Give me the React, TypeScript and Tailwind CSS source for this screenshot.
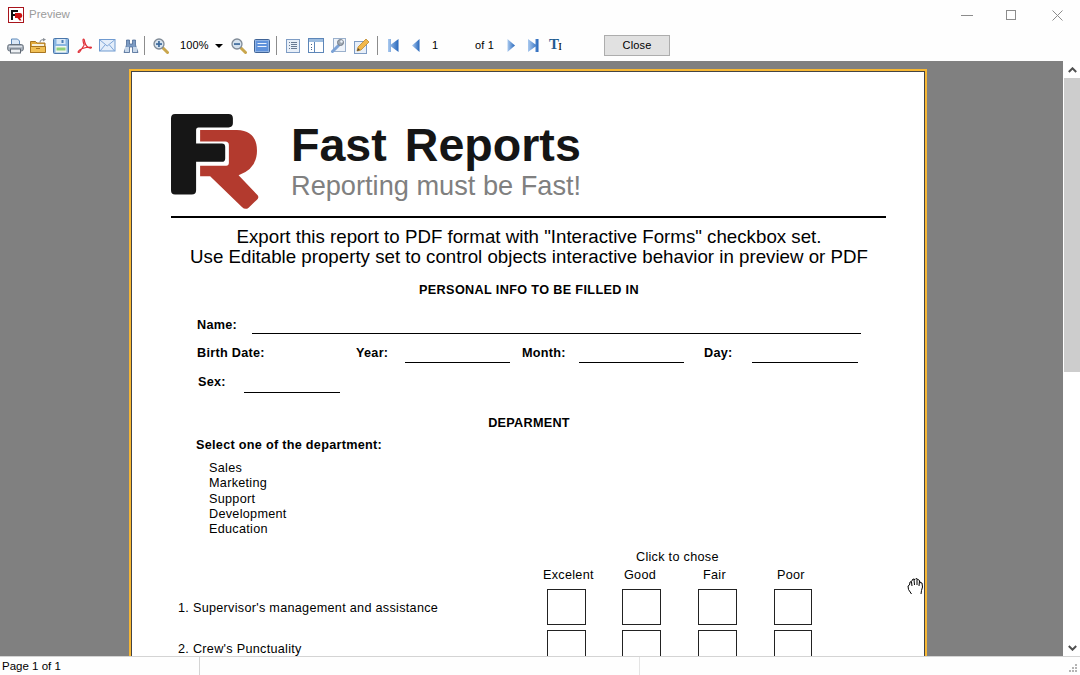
import React from "react";

const Sep = ({ ml }: { ml: string }) => <div className={`w-px h-[19px] bg-[#8c8c8c] ${ml}`} />;

const Printer = () => (
  <svg width="17" height="16" viewBox="0 0 17 16">
    <path d="M4.5 1h6l2 2v4h-8z" fill="#dbe8f7" stroke="#5f8abb" />
    <rect x="0.7" y="6.5" width="15.6" height="6.5" rx="2" fill="#aab3be" stroke="#6a737e" />
    <rect x="3.5" y="11" width="10" height="4" fill="#eef1f4" stroke="#5f6874" />
    <rect x="2" y="8" width="13" height="1.2" fill="#dfe4ea" />
  </svg>
);
const Folder = () => (
  <svg width="17" height="16" viewBox="0 0 17 16">
    <path d="M10 4.5c0-2 2-3 4-3" fill="none" stroke="#8a8f96" strokeWidth="1.2" />
    <path d="M13 0l3 1.5-3 2z" fill="#8a8f96" />
    <path d="M.5 3.5h5l1.5 1.5h8v9.5H.5z" fill="#e0a93c" stroke="#a87520" />
    <rect x="2" y="6" width="12" height="3" fill="#f5efdc" />
    <path d="M.5 8.5h15v6H.5z" fill="#f0bf55" stroke="#a87520" />
    <rect x="6" y="10" width="4" height="1" fill="#a87520" />
  </svg>
);
const Save = () => (
  <svg width="16" height="16" viewBox="0 0 16 16">
    <rect x="0.5" y="0.5" width="15" height="15" rx="1" fill="#8ab6e2" stroke="#4a76aa" />
    <rect x="3.5" y="1" width="9" height="5" fill="#dbe9f7" />
    <rect x="8.5" y="2" width="2" height="3" fill="#4a7db5" />
    <rect x="2.5" y="8" width="11" height="6.5" fill="#f2f6f0" />
    <rect x="3.5" y="9.5" width="9" height="3" fill="#8fd07a" />
  </svg>
);
const Pdf = () => (
  <svg width="15" height="16" viewBox="0 0 15 16">
    <path d="M6.6 1c-1 0-.6 3 .6 6L3 13.5c-1 1.5-2.4 1-1.8 0C2 12 6 9.6 14 9c.8 0 .5 1.4-.6 1.2C11 9.7 8.6 7.5 7.7 4 7.3 2.4 7.6 1 6.6 1z" fill="none" stroke="#e0313a" strokeWidth="1.2" />
  </svg>
);
const Mail = () => (
  <svg width="17" height="13" viewBox="0 0 17 13">
    <rect x="0.5" y="0.5" width="15.5" height="11.5" fill="#e4eefa" stroke="#6f9ad0" />
    <path d="M1 1l7.2 6L15.5 1M1 12l5-6M15.5 12l-5-6" fill="none" stroke="#7fa6d8" />
  </svg>
);
const Binoculars = () => (
  <svg width="16" height="16" viewBox="0 0 16 16">
    <path d="M3.5 2h3v4h3V2h3v5l2.5 7.5H9.5V9h-3v5.5H1L3.5 7z" fill="#7d9cc4" stroke="#3f5f8c" strokeWidth="0.7" />
    <rect x="2" y="9" width="4" height="5" fill="#c7d7ea" />
    <rect x="10" y="9" width="4" height="5" fill="#c7d7ea" />
  </svg>
);
const Zoom = ({ plus }: { plus?: boolean }) => (
  <svg width="16" height="16" viewBox="0 0 16 16">
    <path d="M10 10l4.5 4.5" stroke="#c9a64c" strokeWidth="3" strokeLinecap="round" />
    <circle cx="6" cy="6" r="5" fill="#d5e2ee" stroke="#7f8a96" strokeWidth="1.3" />
    <rect x="3" y="5.2" width="6" height="1.7" fill="#3d6a9c" />
    {plus && <rect x="5.1" y="3" width="1.7" height="6" fill="#3d6a9c" />}
  </svg>
);
const PageView = () => (
  <svg width="16" height="14" viewBox="0 0 16 14">
    <rect x="0.5" y="0.5" width="15" height="13" rx="1" fill="#8fb2e2" stroke="#3f6396" />
    <rect x="2" y="2" width="12" height="10" fill="#5f92dc" />
    <rect x="3.5" y="4" width="9" height="1" fill="#eaf2fc" />
    <rect x="3.5" y="7" width="9" height="1" fill="#eaf2fc" />
  </svg>
);
const Outline = () => (
  <svg width="14" height="14" viewBox="0 0 14 14">
    <rect x="0.5" y="0.5" width="13" height="13" fill="#e8eff8" stroke="#7e9cc4" />
    <path d="M5 3.5h6M5 5.5h6M5 7.5h6M5 9.5h6M3 3.5h1M3 6.5h1M3 9.5h1" stroke="#687a92" />
  </svg>
);
const Thumbs = () => (
  <svg width="16" height="15" viewBox="0 0 16 15">
    <rect x="0.5" y="0.5" width="15" height="14" fill="#fff" stroke="#5d86b8" />
    <rect x="1" y="1" width="14" height="3" fill="#9dbde0" />
    <rect x="6" y="4" width="1" height="10" fill="#5d86b8" />
    <path d="M3 6h1v1H3zM3 9h1v1H3zM3 12h1v-1H3z" fill="#44648c" />
  </svg>
);
const Wrench = () => (
  <svg width="15" height="15" viewBox="0 0 15 15">
    <rect x="2.5" y="0.5" width="12" height="13" fill="#eef3fa" stroke="#9ab0cc" />
    <path d="M1.5 13.5l6-6" stroke="#7ba2d6" strokeWidth="3" strokeLinecap="round" />
    <circle cx="9.5" cy="4.5" r="3" fill="#9fa8b2" stroke="#727c88" />
    <circle cx="10.5" cy="3.5" r="1.2" fill="#eef3fa" />
  </svg>
);
const Pencil = () => (
  <svg width="17" height="16" viewBox="0 0 17 16">
    <rect x="0.5" y="3.5" width="12" height="12" fill="#e8eff8" stroke="#7e9cc4" />
    <path d="M3 13l1-4 8-8 3 3-8 8z" fill="#f2b84b" stroke="#b57e1f" strokeWidth="0.7" />
    <path d="M3 13l1-3 2 2z" fill="#5c4a2c" />
  </svg>
);
const Nav = ({ dir, bar }: { dir: "l" | "r"; bar?: boolean }) => {
  const w = bar ? 11 : 8;
  return (
    <svg width={w} height="13" viewBox={`0 0 ${w} 13`}>
      <defs>
        <linearGradient id={`g${dir}${bar ? 1 : 0}`} x1="0" x2="1" y1="0" y2="0">
          <stop offset="0" stopColor="#a9c9ef" />
          <stop offset="1" stopColor="#2767bb" />
        </linearGradient>
      </defs>
      {dir === "l" ? (
        bar ? (
          <path d="M0 0h3v5.5L10.5 0v13L3 7.5V13H0z" fill={`url(#g${dir}1)`} />
        ) : (
          <path d="M7.5 0v13L0 6.5z" fill={`url(#g${dir}0)`} />
        )
      ) : bar ? (
        <path d="M0 0l7.5 5.5V0h3v13h-3V7.5L0 13z" fill={`url(#g${dir}1)`} />
      ) : (
        <path d="M.5 0L8 6.5.5 13z" fill={`url(#g${dir}0)`} />
      )}
    </svg>
  );
};

const Logo = () => (
  <svg width="88" height="95" viewBox="33 42 263 284" className="block">
    <path d="M45 42H205Q218 42 218 55V70Q218 82 205 82H115Q108 82 108 90V130H185Q195 130 195 140V175Q195 185 185 185H108V270Q108 283 95 283H45Q33 283 33 270V55Q33 42 45 42Z" fill="#161616" />
    <path d="M120 90H230Q290 92 290 152Q290 205 235 225L292 285Q297 292 290 298L265 322Q255 330 245 320L150 228H120V197H198Q206 197 206 188V135Q206 124 195 124H120Z" fill="#b33a2e" />
  </svg>
);

const Field = ({ w }: { w: string }) => <div className={`h-px bg-black self-end ${w}`} />;

const Boxes = () => (
  <div className="flex">
    <div className="w-[39px] h-[36px] border border-[#222] shrink-0" />
    <div className="w-[39px] h-[36px] border border-[#222] shrink-0 ml-[36px]" />
    <div className="w-[39px] h-[36px] border border-[#222] shrink-0 ml-[37px]" />
    <div className="w-[38px] h-[36px] border border-[#222] shrink-0 ml-[37px]" />
  </div>
);

export default function App() {
  return (
    <div className="w-[1080px] h-[675px] flex flex-col bg-white overflow-hidden relative font-['Liberation_Sans',sans-serif] text-black">
      {/* title bar */}
      <div className="h-[30px] shrink-0 flex items-center bg-[#fefefe]">
        <svg width="16" height="16" viewBox="0 0 16 16" className="ml-2">
          <rect x="0.5" y="0.5" width="15" height="15" fill="#fff" stroke="#a8141c" />
          <path d="M3 3h7v2H5v2h4v2H5v4H3z" fill="#111" />
          <path d="M7 6h4.5a2.5 2.5 0 0 1 .5 5l1.5 2.5h-2L9.5 11H7z" fill="#c11" />
        </svg>
        <span className="ml-[5px] text-[11.5px] text-[#9b9b9b]">Preview</span>
        <div className="ml-auto flex items-center">
          <div className="w-3 h-px bg-[#8c8c8c]" />
          <div className="w-[10px] h-[10px] border border-[#8c8c8c] ml-[33px]" />
          <svg width="11" height="11" viewBox="0 0 11 11" className="ml-[36px] mr-[17px]">
            <path d="M.5.5l10 10M10.5.5l-10 10" stroke="#8c8c8c" />
          </svg>
        </div>
      </div>
      {/* toolbar */}
      <div className="h-[31px] shrink-0 flex items-center bg-[#fefefe] relative text-[11px] tracking-[0.15px]">
        <div className="ml-[7px] flex"><Printer /></div>
        <div className="ml-[6px] flex"><Folder /></div>
        <div className="ml-[6px] flex"><Save /></div>
        <div className="ml-[8px] flex"><Pdf /></div>
        <div className="ml-[7px] flex"><Mail /></div>
        <div className="ml-[7px] flex"><Binoculars /></div>
        <Sep ml="ml-[5px]" />
        <div className="ml-[8px] flex"><Zoom plus /></div>
        <span className="ml-[11px] w-[30px]">100%</span>
        <div className="ml-[5px] w-0 h-0 border-x-[4px] border-x-transparent border-t-[4px] border-t-black" />
        <div className="ml-[8px] flex"><Zoom /></div>
        <div className="ml-[7px] flex"><PageView /></div>
        <Sep ml="ml-[6px]" />
        <div className="ml-[9px] flex"><Outline /></div>
        <div className="ml-[8px] flex"><Thumbs /></div>
        <div className="ml-[7px] flex"><Wrench /></div>
        <div className="ml-[8px] flex"><Pencil /></div>
        <Sep ml="ml-[6px]" />
        <div className="ml-[10px] flex"><Nav dir="l" bar /></div>
        <div className="ml-[13px] flex"><Nav dir="l" /></div>
        <span className="ml-[12px] w-[43px]">1</span>
        <span className="w-[32px]">of 1</span>
        <div className="flex"><Nav dir="r" /></div>
        <div className="ml-[13px] flex"><Nav dir="r" bar /></div>
        <span className="ml-[10px] flex items-start relative -top-px">
          <span className="font-['Liberation_Serif',serif] font-bold text-[15px] leading-none text-[#1f5c92]">T</span>
          <span className="font-['Liberation_Serif',serif] text-[11px] leading-none mt-[4px] -ml-px">I</span>
        </span>
        <button className="ml-[42px] w-[66px] h-[21px] bg-[#e1e1e1] border border-[#adadad] text-[11px] leading-none text-black">Close</button>
      </div>
      {/* viewer */}
      <div className="flex-1 min-h-0 flex">
        <div className="flex-1 min-w-0 bg-[#808080] overflow-hidden pl-[129px] pt-[8px]">
          <div className="w-[798px] border-2 border-[#f7b733]">
            <div className="border border-[#444] bg-white h-[700px] text-[12.67px] tracking-[0.28px] leading-[15px]">
              {/* logo */}
              <div className="flex pt-[42px] pl-[39px]">
                <Logo />
                <div className="ml-[32px] mt-[6px] flex flex-col">
                  <span className="font-bold text-[46.6px] leading-[50px] tracking-normal text-[#151515] [word-spacing:5px]">Fast Reports</span>
                  <span className="text-[27.2px] leading-[30px] tracking-normal text-[#808080] mt-[1px]">Reporting must be Fast!</span>
                </div>
              </div>
              <div className="h-[2px] bg-black ml-[39px] w-[715px] mt-[7px]" />
              <div className="mt-[9px] text-center text-[18.72px] leading-[20px] tracking-normal w-[794px]">
                <div>Export this report to PDF format with "Interactive Forms" checkbox set.</div>
                <div>Use Editable property set to control objects interactive behavior in preview or PDF</div>
              </div>
              <div className="mt-[16px] text-center font-bold tracking-[0.35px] w-[794px]">PERSONAL INFO TO BE FILLED IN</div>
              {/* name */}
              <div className="flex mt-[18px] h-[18px] pt-[2px] pl-[65px] font-bold items-start">
                <span className="w-[55px]">Name:</span>
                <Field w="w-[609px]" />
              </div>
              <div className="flex mt-[11px] h-[18px] pt-[1px] font-bold items-start">
                <span className="ml-[65px] w-[159px]">Birth Date:</span>
                <span className="w-[49px]">Year:</span>
                <Field w="w-[105px]" />
                <span className="ml-[12px] w-[57px]">Month:</span>
                <Field w="w-[105px]" />
                <span className="ml-[20px] w-[48px]">Day:</span>
                <Field w="w-[106px]" />
              </div>
              <div className="flex mt-[12px] h-[18px] font-bold items-start pl-[66px]">
                <span className="w-[46px]">Sex:</span>
                <Field w="w-[96px]" />
              </div>
              <div className="mt-[23px] text-center font-bold w-[794px]">DEPARMENT</div>
              <div className="mt-[7px] ml-[64px] font-bold">Select one of the department:</div>
              <div className="mt-[8px] ml-[77px] flex flex-col leading-[15.3px]">
                <span>Sales</span>
                <span>Marketing</span>
                <span>Support</span>
                <span>Development</span>
                <span>Education</span>
              </div>
              <div className="mt-[13px] ml-[504px]">Click to chose</div>
              <div className="flex mt-[3px] h-[15px]">
                <span className="ml-[411px] w-[81px]">Excelent</span>
                <span className="w-[79px]">Good</span>
                <span className="w-[74px]">Fair</span>
                <span>Poor</span>
              </div>
              <div className="flex items-center mt-[6px] h-[36px]">
                <span className="ml-[46px] w-[369px] pt-[2px]">1. Supervisor's management and assistance</span>
                <Boxes />
              </div>
              <div className="flex items-center mt-[5px] h-[36px]">
                <span className="ml-[46px] w-[369px] pt-[2px]">2. Crew's Punctuality</span>
                <Boxes />
              </div>
            </div>
          </div>
        </div>
        {/* scrollbar */}
        <div className="w-[17px] shrink-0 bg-white flex flex-col pl-px">
          <div className="h-[17px] flex items-center justify-center shrink-0">
            <svg width="9" height="6" viewBox="0 0 9 6"><path d="M.8 5L4.5 1.3 8.2 5" fill="none" stroke="#505050" strokeWidth="2" /></svg>
          </div>
          <div className="h-[294px] bg-[#cdcdcd] shrink-0" />
          <div className="mt-auto h-[17px] flex items-center justify-center shrink-0">
            <svg width="9" height="6" viewBox="0 0 9 6"><path d="M.8 1L4.5 4.7 8.2 1" fill="none" stroke="#505050" strokeWidth="2" /></svg>
          </div>
        </div>
      </div>
      {/* status */}
      <div className="h-[19px] shrink-0 border-t border-[#d4d4d4] flex items-stretch text-[11.5px] bg-[#fefefe]">
        <div className="w-[200px] pl-[2px] border-r border-[#d4d4d4] leading-[18px]">Page 1 of 1</div>
        <div className="w-[440px] border-r border-[#e4e4e4]" />
        <div className="flex-1 flex justify-end items-end pr-[2px] pb-[2px]">
          <svg width="9" height="9" viewBox="0 0 9 9" fill="#b4b4b4">
            <rect x="6" y="0" width="2" height="2" />
            <rect x="3" y="3" width="2" height="2" />
            <rect x="6" y="3" width="2" height="2" />
            <rect x="0" y="6" width="2" height="2" />
            <rect x="3" y="6" width="2" height="2" />
            <rect x="6" y="6" width="2" height="2" />
          </svg>
        </div>
      </div>
      {/* hand cursor */}
      <svg width="17" height="18" viewBox="0 0 17 18" className="absolute left-[907px] top-[577px]">
        <path d="M4.5 17L1.5 12.5 1 9l1.5-1L3 5l1.5-.5L6 2l2 .5L9 1.5l2 1 1.5 1 .5 2 2 .5.5 4-1 3.5-.5 3.5" fill="#fff" stroke="#000" strokeWidth="1" />
        <path d="M4.5 5l.5 4M7 2.5L7.5 8M10 2.5v5.5M12.5 4L12 9" fill="none" stroke="#000" />
      </svg>
    </div>
  );
}
